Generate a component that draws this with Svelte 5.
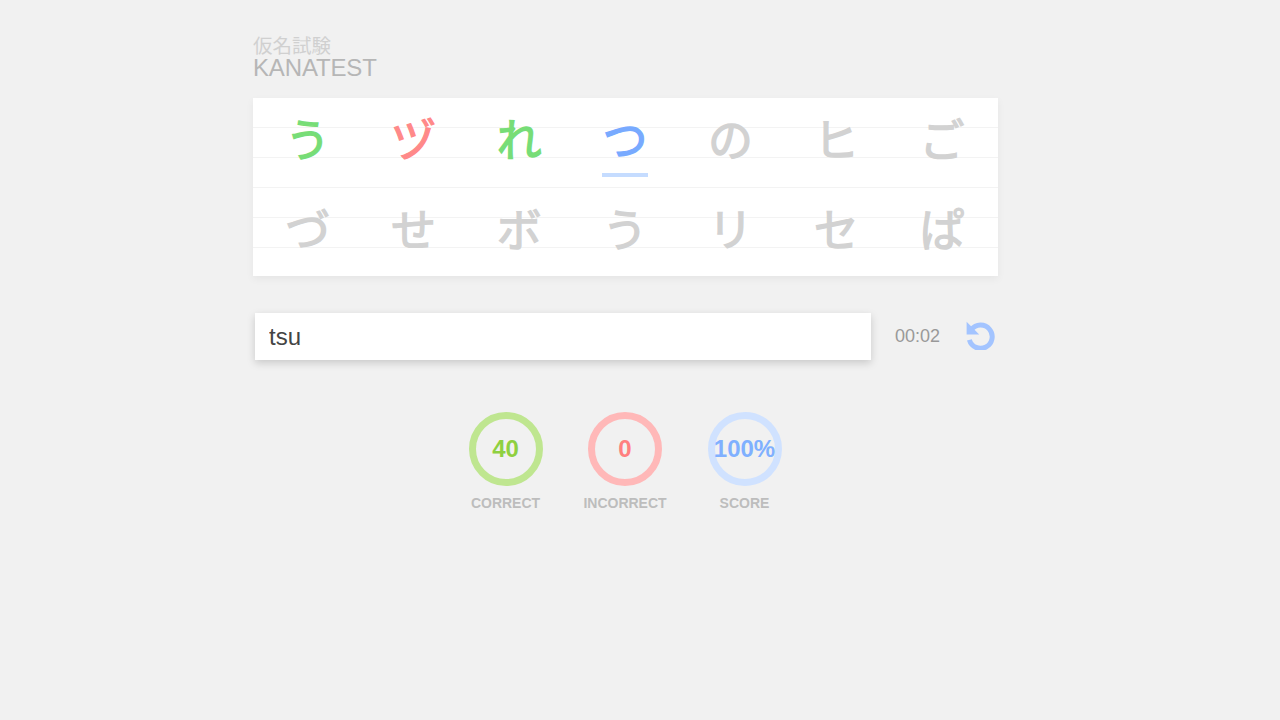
<script>
  const kana = [
    { ch: 'う', state: 'right' },
    { ch: 'ヅ', state: 'wrong' },
    { ch: 'れ', state: 'right' },
    { ch: 'つ', state: 'current' },
    { ch: 'の' },
    { ch: 'ヒ' },
    { ch: 'ご' },
    { ch: 'づ' },
    { ch: 'せ' },
    { ch: 'ボ' },
    { ch: 'う' },
    { ch: 'リ' },
    { ch: 'セ' },
    { ch: 'ぱ' }
  ];

  const stats = [
    { value: '40', label: 'CORRECT', kind: 'good' },
    { value: '0', label: 'INCORRECT', kind: 'bad' },
    { value: '100%', label: 'SCORE', kind: 'total' }
  ];

  let answer = 'tsu';
</script>

<div class="page">
  <header class="title">
    <div class="jp">仮名試験</div>
    <div class="en">KANATEST</div>
  </header>

  <div class="board">
    {#each kana as k}
      <div class="cell {k.state || ''}">
        <span>{k.ch}</span>
      </div>
    {/each}
  </div>

  <div class="controls">
    <input class="answer" type="text" bind:value={answer} />
    <div class="timer">00:02</div>
    <button class="reset" aria-label="Restart">
      <svg viewBox="0 0 30 30" width="30" height="30">
        <path d="M6.4 9.6 A11.6 11.6 0 1 1 4.4 19.8" fill="none" stroke="#a3c4ff" stroke-width="5" />
        <path d="M1.6 1.8 L1.6 14.6 L14.2 14.6 Z" fill="#a3c4ff" />
      </svg>
    </button>
  </div>

  <div class="stats">
    {#each stats as s}
      <div class="stat {s.kind}">
        <div class="ring">{s.value}</div>
        <div class="label">{s.label}</div>
      </div>
    {/each}
  </div>
</div>

<style>
  :global(body) {
    margin: 0;
    background: #f1f1f1;
    font-family: "Liberation Sans", Arial, sans-serif;
  }
  .page {
    width: 745px;
    margin-left: 253px;
    padding-top: 34px;
    min-height: 686px;
  }
  .title {
    height: 64px;
    line-height: 1;
  }
  .jp {
    font-family: "Noto Sans CJK JP", sans-serif;
    font-size: 19.5px;
    line-height: 22px;
    color: #d0d0d0;
  }
  .en {
    font-size: 24px;
    letter-spacing: -0.15px;
    line-height: 24px;
    color: #b6b6b6;
  }
  .board {
    display: grid;
    grid-template-columns: repeat(7, 105.7px);
    grid-auto-rows: 90px;
    height: 178px;
    padding-left: 2px;
    box-sizing: border-box;
    background-color: #fff;
    background-image: repeating-linear-gradient(to bottom, transparent 0, transparent 29px, #f3f3f3 29px, #f3f3f3 30px);
    background-size: 100% 150px;
    background-repeat: no-repeat;
    box-shadow: 0 3px 8px rgba(0, 0, 0, 0.05);
  }
  .cell {
    position: relative;
    display: flex;
    justify-content: center;
    font-family: "Noto Sans CJK JP", sans-serif;
    font-size: 45px;
    line-height: 79px;
    -webkit-text-stroke: 1.3px currentColor;
    color: #d2d2d2;
  }
  .cell.right {
    color: #77dd77;
  }
  .cell.wrong {
    color: #ff8989;
  }
  .cell.current {
    color: #78aaff;
  }
  .cell.current::after {
    content: '';
    position: absolute;
    left: 30px;
    top: 74.5px;
    width: 46px;
    height: 4.5px;
    background: #c5dcff;
  }
  .controls {
    display: flex;
    align-items: center;
    margin-top: 37px;
    padding-left: 2px;
  }
  .answer {
    width: 616px;
    height: 47px;
    box-sizing: border-box;
    padding: 0 14px;
    border: 0;
    outline: 0;
    background: #fff;
    font-family: "Liberation Sans", Arial, sans-serif;
    font-size: 24px;
    color: #444;
    box-shadow: 0 3px 8px rgba(0, 0, 0, 0.17);
  }
  .timer {
    margin-left: 24px;
    font-size: 18px;
    color: #999;
    width: 45px;
  }
  .reset {
    margin-left: 25px;
    margin-bottom: 3px;
    padding: 0;
    border: 0;
    background: none;
    width: 30px;
    height: 30px;
  }
  .reset svg {
    display: block;
  }
  .stats {
    display: flex;
    justify-content: center;
    gap: 45px;
    margin-top: 52px;
    padding-right: 1px;
  }
  .stat {
    width: 74.5px;
    display: flex;
    flex-direction: column;
    align-items: center;
  }
  .ring {
    width: 74px;
    height: 74px;
    box-sizing: border-box;
    border: 7px solid;
    border-radius: 50%;
    display: flex;
    align-items: center;
    justify-content: center;
    font-size: 24px;
    font-weight: bold;
    white-space: nowrap;
  }
  .label {
    margin-top: 9px;
    font-size: 14px;
    line-height: 16px;
    font-weight: bold;
    color: #bdbdbd;
    white-space: nowrap;
  }
  .good .ring {
    color: #8fd040;
    border-color: #bfe690;
  }
  .bad .ring {
    color: #ff7f7f;
    border-color: #ffb8b8;
  }
  .total .ring {
    color: #80b0ff;
    border-color: #d0e2ff;
  }
</style>
